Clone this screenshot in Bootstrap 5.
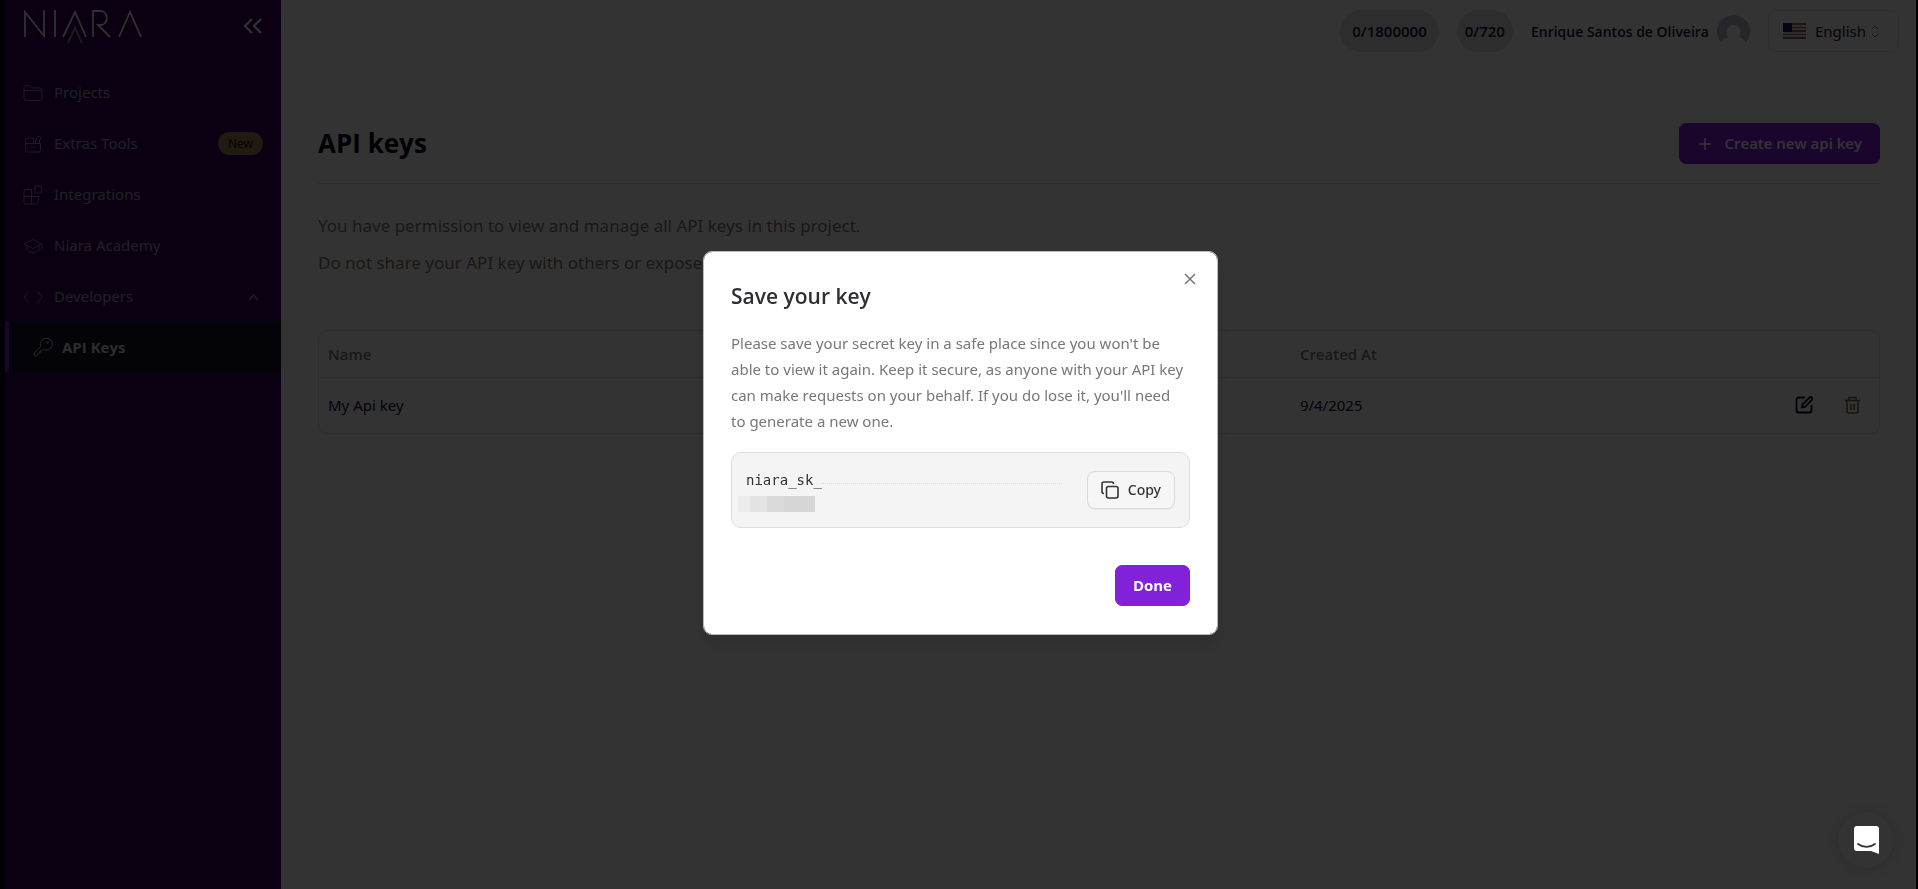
<!DOCTYPE html>
<html lang="en">
<head>
<meta charset="utf-8">
<meta name="viewport" content="width=device-width, initial-scale=1">
<title>API keys - Niara</title>
<link href="https://cdn.jsdelivr.net/npm/bootstrap@5.3.0/dist/css/bootstrap.min.css" rel="stylesheet">
<style>
body{font-family:"Noto Sans","Open Sans",sans-serif;font-size:15px;color:#0f0f28;background:#fff;overflow:hidden}
svg{display:block;flex:none;fill:none;stroke:currentColor}
svg.solid{stroke:none}
.side{width:281px;flex:none;background:#32005a;border-left:5px solid #000a1e;color:#a0a0b4}
.side-head{height:67px;padding:10px 19px 0 19px;color:#eee}
.side-link{height:51px;padding:0 18px;gap:11px;color:inherit;text-decoration:none;font-size:15px;width:100%;border:0;background:none}
.side-link svg{color:#8c82c8}
.side-link .chev{color:#a0a0b4}
.side-sub{height:50px;background:#0f0f28;border-left:4px solid #8122d9;padding-left:24px;gap:9px;font-family:"Open Sans",sans-serif;font-weight:700;color:#dcdcdc}
.side-sub svg{color:#c8c8c8}
.pill-new{background:#a08250;color:#0f0f14;font-size:12px;line-height:23px;padding:0 10px;border-radius:12px}
.edge{border-right:2px solid #000}
.topbar{padding:10px 17px 0;gap:18px;height:52px}
.pill-count{height:42px;border-radius:21px;background:#e1e1e6;font-family:"Open Sans",sans-serif;font-weight:600;font-size:15px;color:#140a32}
.user-name{font-family:"Open Sans",sans-serif;font-weight:600;font-size:14px;color:#1e0f46}
.lang{height:42px;width:131px;border:1px solid #e6e6eb;border-radius:8px;background:#fff;color:#1e1432;font-size:15px;padding:0 14px;gap:9px}
.lang .updown{margin-left:-4px;color:#78788c}
.content{padding:71px 36px 0 37px}
.title-row{border-bottom:1px solid #e0e0e0;padding-bottom:19px}
.title-row h1{font-family:"Open Sans",sans-serif;font-size:26px;font-weight:700;line-height:41px;color:#05051e}
.btn-purple{--bs-btn-bg:#8122d9;--bs-btn-color:#fff;--bs-btn-border-color:#8122d9;--bs-btn-hover-bg:#6d18bd;--bs-btn-hover-color:#fff;--bs-btn-hover-border-color:#6d18bd;height:41px;border-radius:7px;font-family:"Open Sans",sans-serif;font-size:15px;font-weight:700;padding:0 17px}
.btn-create{font-weight:600}
.note{padding-top:23px;font-size:17px;line-height:37px;color:#82786e}
.note p{margin:0}
.keys-box{margin-top:49px;border:1px solid #e0e0e0;border-radius:9px}
.keys-box table{--bs-table-bg:transparent;font-size:15px;table-layout:fixed}
.keys-box th{height:46px;padding:0 9px;color:#82786e;font-family:"Open Sans",sans-serif;font-weight:600;vertical-align:middle;border-color:#e0e0e0}
.keys-box td{height:56px;padding:0 9px;vertical-align:middle;border:0;color:#140a32}
.col-name{width:62.3%}
.icon-btn{border:0;background:none;padding:0}
.edit{color:#0f051e}
.keys-box .trash{color:#78644b}
.shade{background:rgba(0,0,0,.8);padding:0 0 4px 3px}
.shade .modal-dialog{max-width:515px}
.shade .modal-content{border:1px solid #bbb;border-radius:9px;padding:28px 27px;box-shadow:0 10px 16px rgba(0,0,0,.12)}
.shade h2{font-family:"Open Sans",sans-serif;font-size:21px;font-weight:600;line-height:32px;color:#2f2f33;margin:0 0 18px}
.modal-text{font-size:15px;line-height:26px;color:#777;margin:0 0 18px}
.close-x{position:absolute;top:16px;right:16px;padding:5px;border:0;background:none;color:#777}
.key-row{min-height:76px;background:#f4f4f4;border:1px solid #dedede;border-radius:10px;padding:10px 14px}
.key-row code{font-family:"DejaVu Sans Mono",monospace;font-size:14px;line-height:24px;color:#333}
.trace{width:240px;height:0;margin-top:8px;border-top:1px dotted #dedede}
.masked{height:16px;width:77px;margin-left:-8px;background:linear-gradient(90deg,#ececec 0 16%,#e3e3e3 16% 38%,#dadada 38% 60%,#d6d6d6 60%)}
.btn-copy{height:38px;border:1px solid #dadada;border-radius:8px;background:#f6f6f6;font-size:14px;font-weight:500;color:#333;padding:0 13px;gap:9px;box-shadow:0 1px 1px rgba(0,0,0,.05)}
.modal-foot{padding-top:37px}
.chat{position:fixed;right:24px;bottom:21px;width:56px;height:56px;border:0;background:#333;z-index:1100;box-shadow:0 1px 14px rgba(0,0,0,.14)}
</style>
</head>
<body>
<div class="d-flex min-vh-100 edge">
  <aside class="side">
    <div class="side-head d-flex justify-content-between align-items-start">
      <svg width="118" height="34" viewBox="0 0 118 34" stroke-width="1.8" role="img" aria-label="Niara"><path d="M1 27V2l19 24V0M31 0v27M39 27 51 2l11 25M69 27V1h9a7.500 7.500 0 0 1 0 14h-4l12 12M95 27 106 2l11 25"/><path d="m44 33 7-15 7 15" stroke="#a08c78"/></svg>
      <button class="icon-btn text-reset mt-2" type="button" aria-label="Collapse menu"><svg width="19" height="16" viewBox="0 0 19 16" stroke-width="2.300"><path d="M9 1 2 8l7 7M18 1l-7 7 7 7"/></svg></button>
    </div>
    <nav>
      <a href="#" class="side-link d-flex align-items-center"><svg width="20" height="18" viewBox="0 0 20 18"><path d="M1 6.500h18M1 14V3.500a2 2 0 0 1 2-2h3.500L9 4h8a2 2 0 0 1 2 2v8a2.500 2.500 0 0 1-2.500 2.500h-13A2.500 2.500 0 0 1 1 14z"/></svg>Projects</a>
      <a href="#" class="side-link d-flex align-items-center"><svg width="20" height="18" viewBox="0 0 20 18"><path d="M2.500 8.500h15V15a2 2 0 0 1-2 2h-11a2 2 0 0 1-2-2zM3 8.500C1.500 5 2.500 3 4.500 3.500c.5-2 3-2 3.500 0 2-1 3 0 2.500 2v3M12.500 8l1-5.500 3-1.500 1.500 2-1.500 2.500V8M8 11.500c1 1.200 3 1.200 4 0"/></svg>Extras Tools<span class="pill-new ms-auto">New</span></a>
      <a href="#" class="side-link d-flex align-items-center"><svg width="20" height="20" viewBox="0 0 20 20"><path d="M12 1h6.500v7H12zM1 11.500h14.500V17a2 2 0 0 1-2 2H3a2 2 0 0 1-2-2V6.500a2 2 0 0 1 2-2h5.500V19"/></svg>Integrations</a>
      <a href="#" class="side-link d-flex align-items-center"><svg width="20" height="16" viewBox="0 0 20 16"><path d="m1 6 9-4.500L19 6l-9 4.500zM4 7.500v4.500c3 3.300 9 3.300 12 0V7.500M19 6v5"/></svg>Niara Academy</a>
      <button type="button" class="side-link d-flex align-items-center" aria-expanded="true"><svg width="20" height="14" viewBox="0 0 20 14"><path d="M6 1 1 7l5 6M14 1l5 6-5 6"/></svg>Developers<svg class="chev ms-auto me-1" width="11" height="8" viewBox="0 0 11 8" stroke-width="1.500"><path d="M1 7l4.500-5L10 7"/></svg></button>
      <a href="#" class="side-link side-sub d-flex align-items-center" aria-current="page"><svg width="20" height="20" viewBox="0 0 20 20"><path d="M13 1.200a6 6 0 1 1-2.500 11.200L8.500 14H7v2H5.500L4 18.800H1.200V16l6.600-6.500A6 6 0 0 1 13 1.200z"/><circle cx="14.500" cy="5.500" r=".8"/></svg>API Keys</a>
    </nav>
  </aside>
  <div class="flex-grow-1">
    <header class="topbar d-flex justify-content-end align-items-center">
      <span class="pill-count px-2 d-flex align-items-center"><span class="px-1">0/1800000</span></span>
      <span class="pill-count px-2 d-flex align-items-center">0/720</span>
      <div class="d-flex align-items-center gap-2"><span class="user-name">Enrique Santos de Oliveira</span><svg class="solid" width="33" height="33" viewBox="0 0 33 33"><path d="M16.500 0A16.500 16.500 0 0 0 4.500 28c1-3 3-5 6.500-6h11c3.500 1 5.500 3 6.500 6A16.500 16.500 0 0 0 16.500 0z" fill="#bebed2"/><circle cx="16.500" cy="17" r="7" fill="#fff"/></svg></div>
      <button type="button" class="lang d-flex align-items-center"><svg class="solid" width="23" height="16" viewBox="0 0 23 16"><path fill="#e6e1d7" d="M0 0h23v16H0z"/><path fill="#8c6e50" d="M0 0h23v2H0zM0 4h23v1H0zM0 7h23v2H0zM0 11h23v1H0zM0 14h23v2H0z"/><path fill="#280f5a" d="M0 0h9v9H0z"/></svg>English<svg class="updown" width="8" height="13" viewBox="0 0 8 13"><path d="m1 4 3-3 3 3M1 9l3 3 3-3"/></svg></button>
    </header>
    <main class="content">
      <div class="title-row d-flex justify-content-between align-items-center">
        <h1 class="mb-0">API keys</h1>
        <button type="button" class="btn btn-purple btn-create d-flex align-items-center gap-2"><svg class="me-1" width="16" height="14" viewBox="0 0 16 14" stroke-width="1.500"><path d="M2 7h12M8 1v12"/></svg>Create new api key</button>
      </div>
      <div class="note">
        <p>You have permission to view and manage all API keys in this project.</p>
        <p>Do not share your API key with others or expose</p>
      </div>
      <div class="keys-box">
        <table class="table mb-0">
          <thead><tr><th class="col-name" scope="col">Name</th><th scope="col">Created At</th><th scope="col" aria-label="Actions"></th></tr></thead>
          <tbody><tr><td>My Api key</td><td>9/4/2025</td><td><div class="d-flex justify-content-end gap-4 pe-2">
            <button class="icon-btn edit me-1" type="button" aria-label="Edit"><svg width="20" height="18" viewBox="0 0 20 18" stroke-width="1.800"><path d="M10 1.500H3.500a2 2 0 0 0-2 2v11a2 2 0 0 0 2 2h11a2 2 0 0 0 2-2V9M7 11.500l.5-3L14.500 1.500a1.600 1.600 0 0 1 2.300 2.300L10 11z"/></svg></button>
            <button class="icon-btn trash" type="button" aria-label="Delete"><svg width="19" height="18" viewBox="0 0 19 18" stroke-width="1.500"><path d="M2 4.500h15M6 4V1.500h7V4M4 4.500V15a2 2 0 0 0 2 2h7a2 2 0 0 0 2-2V4.500M8 8v6M11 8v6"/></svg></button>
          </div></td></tr></tbody>
        </table>
      </div>
    </main>
  </div>
</div>

<div class="modal d-block shade" tabindex="-1" role="dialog" aria-modal="true" aria-labelledby="saveTitle">
  <div class="modal-dialog modal-dialog-centered">
    <div class="modal-content">
      <button type="button" class="close-x" aria-label="Close"><svg width="12" height="12" viewBox="0 0 12 12" stroke-width="1.500"><path d="m1 1 10 10M11 1 1 11"/></svg></button>
      <h2 id="saveTitle">Save your key</h2>
      <p class="modal-text">Please save your secret key in a safe place since you won't be able to view it again. Keep it secure, as anyone with your API key can make requests on your behalf. If you do lose it, you'll need<br>to generate a new one.</p>
      <div class="key-row d-flex justify-content-between align-items-center">
        <div><div class="d-flex align-items-center"><code>niara_sk_</code><div class="trace"></div></div><div class="masked mt-1"></div></div>
        <button type="button" class="btn-copy d-flex align-items-center"><svg width="18" height="18" viewBox="0 0 18 18" stroke-width="1.600"><rect x="5.500" y="5.500" width="11.500" height="11.500" rx="2"/><path d="M3 12.500a2 2 0 0 1-2-2V3a2 2 0 0 1 2-2h7.500a2 2 0 0 1 2 2"/></svg>Copy</button>
      </div>
      <div class="modal-foot d-flex justify-content-end"><button type="button" class="btn btn-purple">Done</button></div>
    </div>
  </div>
</div>
<button type="button" class="chat rounded-circle d-flex align-items-center justify-content-center" aria-label="Open chat"><svg class="solid" width="25" height="28" viewBox="0 0 25 28"><path fill="#fff" d="M3 0h19a3 3 0 0 1 3 3v25l-8-3H3a3 3 0 0 1-3-3V3a3 3 0 0 1 3-3z"/><path d="M4 18c5 3.800 12 3.800 17 0" fill="none" stroke="#333" stroke-width="1.800" stroke-linecap="round"/></svg></button>
<script src="https://cdn.jsdelivr.net/npm/bootstrap@5.3.0/dist/js/bootstrap.bundle.min.js"></script>
</body>
</html>
